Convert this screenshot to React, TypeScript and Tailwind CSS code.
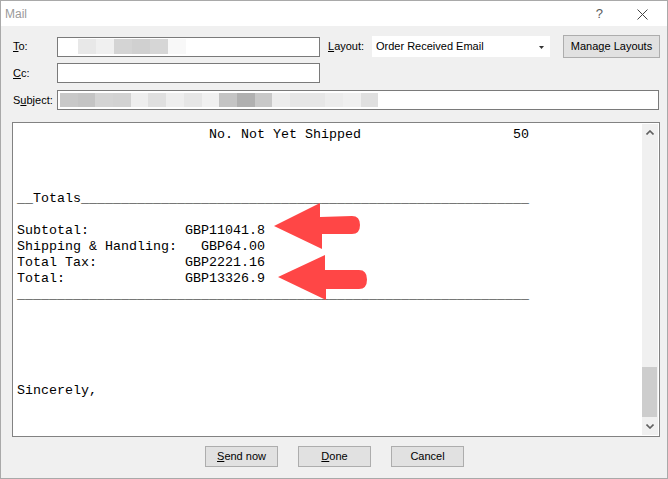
import React from 'react';

const toBlocks = ['bg-[#e8e8e8]', 'bg-[#f0f0f0]', 'bg-[#d4d4d4]', 'bg-[#d0d0d0]', 'bg-[#d6d6d6]', 'bg-[#f8f8f8]'];

const subjectBlocks = [
    'bg-[#c8c8c8]', 'bg-[#c4c4c4]', 'bg-[#d4d4d4]', 'bg-[#d2d2d2]', 'bg-[#eeeeee]', 'bg-[#e0e0e0]',
    'bg-[#eeeeee]', 'bg-[#e6e6e6]', 'bg-[#f0f0f0]', 'bg-[#c4c4c4]', 'bg-[#b0b0b0]', 'bg-[#c8c8c8]',
    'bg-[#ececec]', 'bg-[#e6e6e6]', 'bg-[#e6e6e6]', 'bg-[#ececec]', 'bg-[#f0f0f0]', 'bg-[#e0e0e0]',
];

const u64 = '_'.repeat(64);

const bodyLines = [
    ' '.repeat(24) + 'No. Not Yet Shipped' + ' '.repeat(19) + '50',
    '',
    '',
    '',
    '__Totals' + '_'.repeat(56),
    '',
    'Subtotal:            GBP11041.8',
    'Shipping & Handling:   GBP64.00',
    'Total Tax:           GBP2221.16',
    'Total:               GBP13326.9',
    u64,
    '',
    '',
    '',
    '',
    '',
    'Sincerely,',
];

const Label: React.FC<{ children: React.ReactNode; className?: string }> = ({ children, className }) => (
    <div className={`text-[11px] text-black leading-none ${className ?? ''}`}>{children}</div>
);

const WinButton: React.FC<{ children: React.ReactNode; className?: string }> = ({ children, className }) => (
    <button className={`h-[21px] bg-[#e1e1e1] border border-[#adadad] text-[11px] text-black leading-none flex items-center justify-center ${className ?? ''}`}>
        {children}
    </button>
);

export default function App() {
    return (
        <div
            className="relative w-[668px] h-[479px] border border-[#a9a9a9] bg-[#f0f0f0] flex flex-col overflow-hidden"
            style={{ fontFamily: '"Liberation Sans", Arial, sans-serif' }}
        >
            {/* title bar */}
            <div className="h-[25px] bg-white flex items-center pl-[4px] pr-[19px]">
                <span className="text-[12px] text-[#9a9a9a]">Mail</span>
                <span className="ml-auto text-[13px] text-[#5a5a5a] mr-[34px]">?</span>
                <svg width="11" height="11" viewBox="0 0 11 11" className="mt-[1px]">
                    <path d="M0.5 0.5 L10.5 10.5 M10.5 0.5 L0.5 10.5" stroke="#444" strokeWidth="1" />
                </svg>
            </div>

            <div className="flex flex-col pl-[11px]">
                {/* To row */}
                <div className="mt-[9px] h-[23px] flex items-center">
                    <Label className="w-[45px] pl-[1px]"><span className="underline">T</span>o:</Label>
                    <div className="w-[263px] h-[20px] bg-white border border-[#7a7a7a] flex items-center pl-[20px]">
                        {toBlocks.map((c, i) => (
                            <div key={i} className={`w-[18px] h-[15px] ${c}`} />
                        ))}
                    </div>
                    <Label className="ml-[8px] w-[44px]"><span className="underline">L</span>ayout:</Label>
                    <div className="w-[178px] h-[21px] bg-white flex items-center pl-[4px] pr-[4px]">
                        <span className="text-[11px] text-black">Order Received Email</span>
                        <svg width="5" height="3" viewBox="0 0 5 3" className="ml-auto mr-[2px] mt-[2px]">
                            <path d="M0 0 L5 0 L2.5 3 Z" fill="#333" />
                        </svg>
                    </div>
                    <button className="ml-[13px] w-[97px] h-[23px] bg-[#e1e1e1] border border-[#adadad] text-[11px] text-black leading-none">
                        Mana<span className="underline">g</span>e Layouts
                    </button>
                </div>

                {/* Cc row */}
                <div className="mt-[5px] h-[20px] flex items-center">
                    <Label className="w-[45px] pl-[1px]"><span className="underline">C</span>c:</Label>
                    <div className="w-[263px] h-[20px] bg-white border border-[#7a7a7a]" />
                </div>

                {/* Subject row */}
                <div className="mt-[7px] h-[20px] flex items-center">
                    <Label className="w-[45px] pl-[1px]">S<span className="underline">u</span>bject:</Label>
                    <div className="w-[602px] h-[20px] bg-white border border-[#7a7a7a] flex items-center pl-[2px]">
                        {subjectBlocks.map((c, i) => (
                            <div key={i} className={`w-[17.7px] h-[14px] ${c}`} />
                        ))}
                    </div>
                </div>

                {/* message body */}
                <div className="mt-[12px] w-[648px] h-[315px] bg-white border border-[#828282] flex p-[1px]">
                    <pre
                        className="flex-1 pl-[3px] pt-[3px] text-[13.33px] leading-[16px] text-black whitespace-pre overflow-hidden"
                        style={{ fontFamily: '"Liberation Mono", "Courier New", monospace' }}
                    >
                        {bodyLines.join('\n')}
                    </pre>
                    <div className="w-[16px] bg-[#f0f0f0] flex flex-col items-center">
                        <div className="h-[17px] flex items-center justify-center">
                            <svg width="8" height="5" viewBox="0 0 8 5">
                                <path d="M0.5 4.5 L4 1 L7.5 4.5" stroke="#606060" strokeWidth="1.6" fill="none" />
                            </svg>
                        </div>
                        <div className="flex-1 w-full flex flex-col justify-end">
                            <div className="h-[50px] w-[15px] bg-[#cdcdcd] mb-[1px]" />
                        </div>
                        <div className="h-[17px] flex items-center justify-center">
                            <svg width="8" height="5" viewBox="0 0 8 5">
                                <path d="M0.5 0.5 L4 4 L7.5 0.5" stroke="#606060" strokeWidth="1.6" fill="none" />
                            </svg>
                        </div>
                    </div>
                </div>

                {/* buttons */}
                <div className="mt-[9px] flex pl-[193px] gap-[20px]">
                    <WinButton className="w-[73px]"><span><span className="underline">S</span>end now</span></WinButton>
                    <WinButton className="w-[73px]"><span><span className="underline">D</span>one</span></WinButton>
                    <WinButton className="w-[73px]">Cancel</WinButton>
                </div>
            </div>

            {/* red annotation arrows */}
            <svg className="absolute left-[-1px] top-[-1px] pointer-events-none" width="668" height="479" viewBox="0 0 668 479">
                <path
                    d="M274 226 L320 203 L320 217 L352 216 Q360 216 360 225 Q360 234 352 234 L322 234 L322 249 Z"
                    fill="#ff4646"
                />
                <path
                    d="M278 277 L325 255 L325 270 L359 270 Q367 270 367 279.5 Q367 289 359 289 L326 289 L326 300 Z"
                    fill="#ff4646"
                />
            </svg>
        </div>
    );
}
